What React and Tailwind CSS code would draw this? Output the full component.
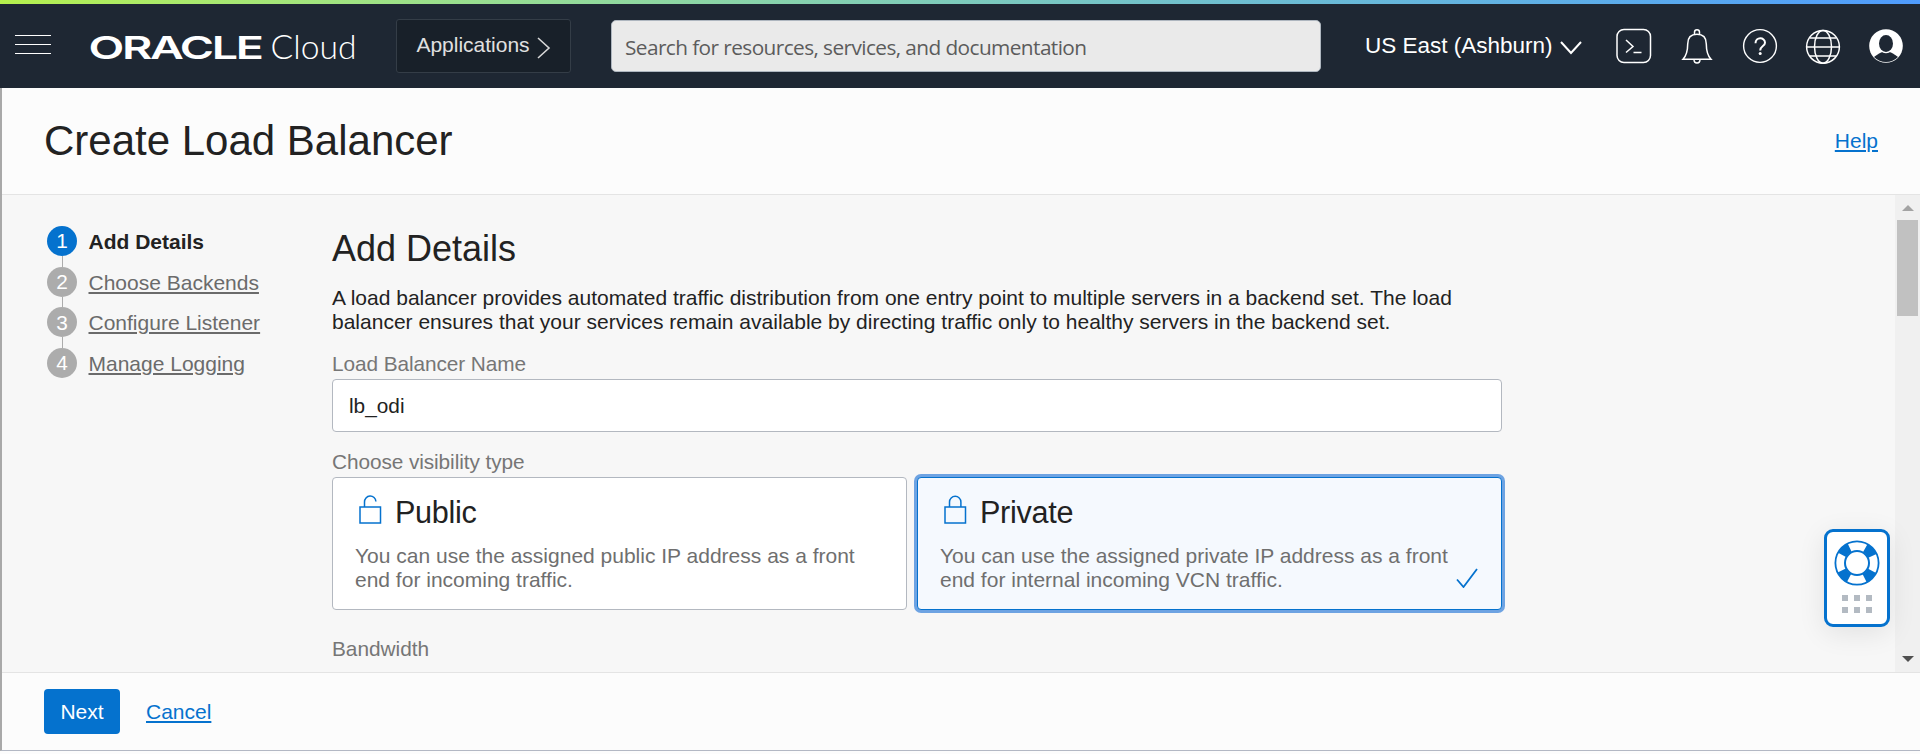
const BASE = "font-['Liberation_Sans',Arial,sans-serif]";

function Header() {
  return (
    <header className="flex h-[84px] shrink-0 items-start bg-[#1e2733] text-white">
      <button className="mt-[31px] ml-[15px] flex w-9 flex-col gap-2" aria-label="Menu">
        <span className="h-px w-full bg-white" />
        <span className="h-px w-full bg-white" />
        <span className="h-px w-full bg-white" />
      </button>
      <svg className="mt-[20px] ml-[39px] h-[50px] w-[268px] shrink-0" viewBox="0 0 268 50" fill="#fff">
        <text x="-1.5" y="35" fontFamily="Inter, sans-serif" fontWeight="600" fontSize="31.6" letterSpacing="-1.6" textLength="173" lengthAdjust="spacingAndGlyphs">ORACLE</text>
        <text x="180.5" y="35" fontFamily="Lato, sans-serif" fontWeight="300" fontSize="34" textLength="86" lengthAdjust="spacingAndGlyphs">Cloud</text>
      </svg>
      <button className="mt-[15px] ml-[38px] flex h-[54px] w-[175px] shrink-0 items-center rounded-[3px] border border-[#343d47] bg-[#182029] pl-[19px] text-[21px] text-[#e0e0e0]">
        <span className="-mt-0.5 w-[114px]">Applications</span>
        <svg className="ml-[7px] mt-[3px] h-[22px] w-[14px]" viewBox="0 0 14 22" fill="none" stroke="#d8d8d8" strokeWidth="1.6">
          <path d="M1 1L12 11L1 21" />
        </svg>
      </button>
      <div className="mt-4 ml-10 flex h-[52px] w-[710px] shrink-0 items-center rounded-[5px] border border-[#aeb6bf] bg-[#eaeaea] pt-[3px] pl-[13px] font-['Open_Sans',sans-serif] text-[20.8px] tracking-[-0.58px] whitespace-nowrap text-[#5c5c5c]">
        Search for resources, services, and documentation
      </div>
      <button className="mt-[28px] ml-[44px] flex h-[26px] w-[251px] shrink-0 items-center text-[22.5px] whitespace-nowrap">
        <span className="mt-px w-[187px]">US East (Ashburn)</span>
        <svg className="mt-1.5 ml-[8px] h-[14px] w-[22px]" viewBox="0 0 22 14" fill="none" stroke="#fff" strokeWidth="2">
          <path d="M1 1L11 12L21 1" />
        </svg>
      </button>
      <div className="mt-[24px] flex shrink-0 items-center gap-[27px]">
        <svg className="size-9" viewBox="0 0 36 36" fill="none" stroke="#fff" strokeWidth="1.5">
          <rect x="1" y="1.5" width="33.5" height="33" rx="7" />
          <path d="M10 12L17 18.5L10 24.5M17.5 24.5H25.5" />
        </svg>
        <svg className="size-9" viewBox="0 0 36 36" fill="none" stroke="#fff" strokeWidth="1.5">
          <path d="M4 31.3H32C28.5 27.5 27.3 23 27.3 16C27.3 10 24.5 6.3 18 6.3C11.5 6.3 8.7 10 8.7 16C8.7 23 7.5 27.5 4 31.3Z" />
          <path d="M15.5 6.3V4.3A2.5 2.5 0 0 1 20.5 4.3V6.3M15 31.5A3 3.5 0 0 0 21 31.5" />
        </svg>
        <svg className="size-9" viewBox="0 0 36 36" fill="none" stroke="#fff" strokeWidth="1.4">
          <circle cx="18" cy="18" r="16.4" />
          <path d="M13.5 15.2C13.5 8.8 23 8.8 23 14.8C23 18.2 18.2 18 18.2 22.5" strokeWidth="2" />
          <circle cx="18.2" cy="25.4" r="1.5" fill="#fff" stroke="none" />
        </svg>
        <svg className="size-9" viewBox="0 0 36 36" fill="none" stroke="#fff" strokeWidth="1.5">
          <circle cx="18" cy="18.8" r="16.4" />
          <ellipse cx="18" cy="18.8" rx="8.5" ry="16.4" />
          <path d="M1.6 19H34.4M5 10H31M5 28H31" />
        </svg>
        <svg className="size-9" viewBox="0 0 36 36">
          <circle cx="18" cy="18" r="16.8" fill="#fff" />
          <path d="M6 29Q12 24.5 14.5 24H21.5Q24 24.5 30 29Q25 34 18 34Q11 34 6 29Z" fill="#1e2733" />
          <path d="M14.5 22H21.5V24.5Q18 26 14.5 24.5Z" fill="#fff" />
          <ellipse cx="18" cy="15.5" rx="7" ry="8.5" fill="#1e2733" />
        </svg>
      </div>
    </header>
  );
}

const steps = ["Add Details", "Choose Backends", "Configure Listener", "Manage Logging"];

function Steps() {
  return (
    <nav className="mt-[31px] ml-[45px] flex w-[285px] shrink-0 flex-col">
      {steps.map((label, i) => (
        <div key={label} className="flex h-[40.6px]">
          <div className="flex w-[30px] flex-col items-center">
            <span className={i === 0 ? "flex h-[30px] w-[30px] shrink-0 items-center justify-center rounded-full bg-[#0572ce] text-[20.8px] text-white" : "flex h-[30px] w-[30px] shrink-0 items-center justify-center rounded-full bg-[#acacac] text-[20.8px] text-white"}>
              {i + 1}
            </span>
            {i < 3 && <span className="w-px flex-1 bg-[#acacac]" />}
          </div>
          <span className={i === 0 ? "ml-[11.5px] text-[21px] leading-8 font-bold text-[#222]" : "ml-[11.5px] text-[21px] leading-8 text-[#6b6b6b] underline decoration-2 underline-offset-2"}>
            {label}
          </span>
        </div>
      ))}
    </nav>
  );
}

function Lock({ open }) {
  return (
    <svg className="h-[30px] w-[24px] shrink-0" viewBox="0 0 24 30" fill="none" stroke="#0572ce" strokeWidth="1.5">
      <rect x="1" y="12" width="20.5" height="16" />
      <path d={open ? "M5.5 12V7A5.7 5.7 0 0 1 16.9 6.5" : "M5.5 12V7A5.7 5.7 0 0 1 16.9 7V12"} />
    </svg>
  );
}

function Card({ title, open, lines, selected }) {
  return (
    <div className={selected ? "flex h-[133px] w-[585px] rounded-[4px] border border-[#0572ce] bg-[#f5f9fe] pl-[22px] shadow-[0_0_0_3px_#6ea3e2]" : "flex h-[133px] w-[575px] rounded-[4px] border border-[#b3b8c0] bg-white pl-[22px]"}>
      <div className="flex-1">
        <div className="mt-4 flex h-[32px] items-center pl-1">
          <Lock open={open} />
          <span className="mt-[3px] ml-[12px] text-[30.6px] leading-8 tracking-[-0.3px] text-[#222]">{title}</span>
        </div>
        <p className="mt-[18px] text-[21px] leading-[24.4px] whitespace-nowrap text-[#6f6f6f]">
          {lines[0]}
          <br />
          {lines[1]}
        </p>
      </div>
      {selected && (
        <svg className="mt-[90px] mr-[23px] h-[20px] w-[22px]" viewBox="0 0 22 20" fill="none" stroke="#0572ce" strokeWidth="1.8">
          <path d="M1 11.5L7.5 19L21 1" />
        </svg>
      )}
    </div>
  );
}

function Scrollbar() {
  return (
    <div className="flex w-[25px] shrink-0 flex-col items-center bg-[#f0f0f0]">
      <svg className="mt-[10px] h-[6px] w-[12px]" viewBox="0 0 12 6" fill="#a3a3a3"><path d="M0 6L6 0L12 6Z" /></svg>
      <div className="mt-[9px] h-[96px] w-[21px] bg-[#c1c1c1]" />
      <svg className="mt-auto mb-[10px] h-[6px] w-[12px]" viewBox="0 0 12 6" fill="#505050"><path d="M0 0L6 6L12 0Z" /></svg>
    </div>
  );
}

function SupportWidget() {
  return (
    <div className="absolute top-[529px] left-[1824px] flex h-[98px] w-[66px] flex-col items-center rounded-[9px] border-3 border-[#0572ce] bg-white pt-2 shadow-[0_6px_28px_rgba(0,0,0,0.09)]">
      <svg className="h-[46px] w-[46px]" viewBox="0 0 46 46" fill="none">
        <circle cx="23" cy="23" r="17" stroke="#0572ce" strokeWidth="9" strokeDasharray="10.5 16.204" strokeDashoffset="-8.1" />
        <circle cx="23" cy="23" r="21.6" stroke="#0572ce" strokeWidth="1.8" />
        <circle cx="23" cy="23" r="12" stroke="#0572ce" strokeWidth="2" />
      </svg>
      <div className="mt-[9px] grid grid-cols-3 gap-[6px]">
        {[0, 1, 2, 3, 4, 5].map((n) => (
          <span key={n} className="h-[6px] w-[6px] bg-[#b3bac2]" />
        ))}
      </div>
    </div>
  );
}

export default function App() {
  return (
    <div className={`${BASE} relative flex h-[754px] w-[1920px] flex-col overflow-hidden bg-[#fcfcfc] text-[#222]`}>
      <div className="h-1 shrink-0 bg-linear-to-r from-[#b5f04c] to-[#4f9bfd]" />
      <Header />
      <div className="flex h-[663px] shrink-0 flex-col border-b border-l-2 border-b-[#b3b8c4] border-l-[#a9a9a9]">
        <div className="flex h-[107px] shrink-0 justify-between border-b border-[#e4e4e4] pr-[42px] pl-[42px]">
          <h1 className="mt-[29px] text-[42px] leading-[48px]">Create Load Balancer</h1>
          <a className="mt-[41px] text-[21px] leading-6 text-[#0572ce] underline decoration-2 underline-offset-2">Help</a>
        </div>
        <div className="flex h-[478px] shrink-0 overflow-hidden border-b border-[#e4e4e4] bg-[#f7f7f7]">
          <Steps />
          <main className="w-[1172px] shrink-0 text-[20.8px]">
            <h2 className="mt-[33px] text-[36px] leading-[42px]">Add Details</h2>
            <p className="mt-[16px] text-[21px] leading-[24px] whitespace-nowrap">
              A load balancer provides automated traffic distribution from one entry point to multiple servers in a backend set. The load
              <br />
              balancer ensures that your services remain available by directing traffic only to healthy servers in the backend set.
            </p>
            <div className="mt-[18px] leading-6 tracking-[-0.08px] text-[#767676]">Load Balancer Name</div>
            <div className="mt-[3px] flex h-[53px] w-[1170px] items-center rounded-[4px] border border-[#b3b8c0] bg-white pl-[16px]">lb_odi</div>
            <div className="mt-[18px] leading-6 tracking-[-0.08px] text-[#767676]">Choose visibility type</div>
            <div className="mt-[3px] flex gap-[10px]">
              <Card title="Public" open lines={["You can use the assigned public IP address as a front", "end for incoming traffic."]} />
              <Card title="Private" selected lines={["You can use the assigned private IP address as a front", "end for internal incoming VCN traffic."]} />
            </div>
            <div className="mt-[27px] leading-6 text-[#767676]">Bandwidth</div>
          </main>
          <div className="flex-1" />
          <Scrollbar />
        </div>
        <footer className="flex flex-1 items-start pl-[42px] text-[21px]">
          <button className="mt-4 flex h-[45px] w-[76px] items-center justify-center rounded-[4px] bg-[#0572ce] text-white">Next</button>
          <a className="mt-[27px] ml-[26px] leading-6 text-[#0572ce] underline decoration-2 underline-offset-2">Cancel</a>
        </footer>
      </div>
      <SupportWidget />
    </div>
  );
}
